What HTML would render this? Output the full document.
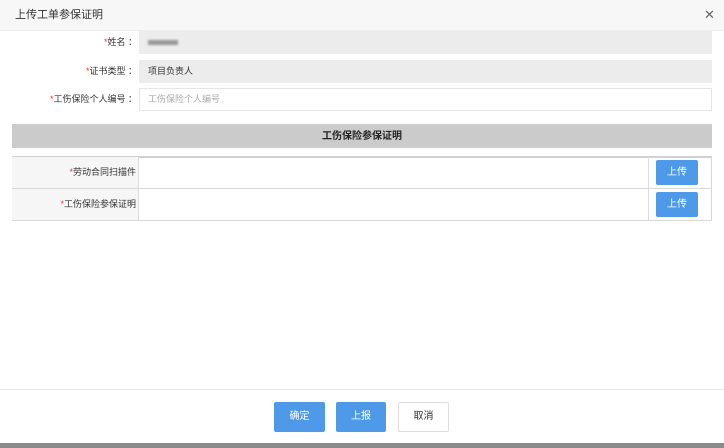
<!DOCTYPE html>
<html><head><meta charset="utf-8"><style>
*{margin:0;padding:0;box-sizing:border-box}
body{width:724px;height:448px;position:relative;background:#fff;font-family:"Liberation Sans","Noto Sans CJK SC",sans-serif;font-size:9px;color:#333;overflow:hidden}
.a{position:absolute}
.r{color:#e33}
.lbl{position:absolute;text-align:right;right:587px;font-size:9px;line-height:12px}
.in{position:absolute;left:139px;width:573px;height:23px;line-height:23px;padding-left:9px;font-size:9px}
.btn{position:absolute;background:#4e9ae8;color:#fff;border-radius:2px;text-align:center;font-size:10px}
</style></head><body>
<div class="a" style="left:0;top:0;width:724px;height:31px;background:#f7f7f7;border-bottom:1px solid #eee"></div>
<div class="a" style="left:15px;top:6px;font-size:11px;color:#333">上传工单参保证明</div>
<div class="a" style="left:704px;top:7px;font-size:13px;color:#666">✕</div>
<div class="lbl" style="top:36px"><span class="r">*</span>姓名 ：</div>
<div class="in" style="top:31px;background:#ececec"><span style="display:inline-block;width:30px;height:5px;background:#999;vertical-align:middle;filter:blur(1px)"></span></div>
<div class="lbl" style="top:65px"><span class="r">*</span>证书类型 ：</div>
<div class="in" style="top:60px;background:#ececec">项目负责人</div>
<div class="lbl" style="top:93px"><span class="r">*</span>工伤保险个人编号 ：</div>
<div class="in" style="top:88px;border:1px solid #e6e6e6;color:#aaa;padding-left:8px;line-height:21px">工伤保险个人编号</div>
<div class="a" style="left:12px;top:124px;width:700px;height:24px;background:#cbcbcb;text-align:center;line-height:26px;font-weight:bold;font-size:10px;color:#222">工伤保险参保证明</div>
<div class="a" style="left:12px;top:156px;width:700px;height:65px;border:1px solid #d8d8d8;border-top:2px solid #d0d0d0"></div>
<div class="a" style="left:12px;top:157px;width:127px;height:63px;background:#f6f6f6;border-right:1px solid #ddd"></div>
<div class="a" style="left:12px;top:188px;width:700px;height:1px;background:#d8d8d8"></div>
<div class="a" style="left:648px;top:157px;width:1px;height:63px;background:#ddd"></div>
<div class="lbl" style="top:166px;right:588px"><span class="r">*</span>劳动合同扫描件</div>
<div class="lbl" style="top:198px;right:588px"><span class="r">*</span>工伤保险参保证明</div>
<div class="btn" style="left:656px;top:160px;width:42px;height:25px;line-height:25px">上传</div>
<div class="btn" style="left:656px;top:192px;width:42px;height:25px;line-height:25px">上传</div>
<div class="a" style="left:0;top:389px;width:724px;height:1px;background:#e5e5e5"></div>
<div class="btn" style="left:274px;top:402px;width:51px;height:30px;line-height:30px">确定</div>
<div class="btn" style="left:336px;top:402px;width:50px;height:30px;line-height:30px">上报</div>
<div class="a" style="left:398px;top:402px;width:51px;height:30px;line-height:28px;border:1px solid #ddd;border-radius:2px;text-align:center;font-size:10px">取消</div>
<div class="a" style="left:0;top:443px;width:724px;height:5px;background:#8a8a8a"></div>
</body></html>
